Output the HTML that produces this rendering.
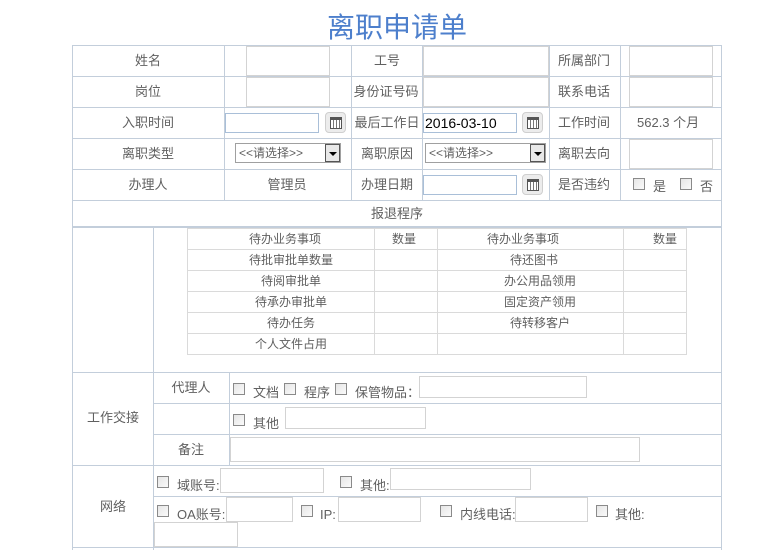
<!DOCTYPE html>
<html><head><meta charset="utf-8">
<style>
*{margin:0;padding:0;box-sizing:border-box}
body{width:782px;height:550px;background:#fff;position:relative;overflow:hidden;font-family:"Liberation Sans","Noto Sans CJK SC",sans-serif;font-size:13px;color:#606060}
div{position:absolute}
.h{height:1px;background:#c3cedb}
.v{width:1px;background:#c3cedb}
.ih{height:1px;background:#dadada}
.iv{width:1px;background:#dadada}
.t{white-space:nowrap;line-height:18px}
.c{transform:translateX(-50%)}
.in{border:1px solid #d3d3d3;background:#fff}
.bin{border:1px solid #a9bfd8;background:#fff}
.cb{width:12px;height:12px;border:1px solid #8a8a8a;background:linear-gradient(135deg,#e6e6e6,#fafafa)}
.cal{width:21px;height:21px;border:1px solid #cfcfcf;border-radius:4px;background:#ececec}
.cal i{position:absolute;left:4px;top:4px;width:12px;height:12px;border:1px solid #555;border-top:3px solid #555;background:repeating-linear-gradient(90deg,#fff 0 2px,#777 2px 3px),#fff}
.sel{border:1px solid #a0a0a0;background:#fff;height:20px;font-size:12px;line-height:18px;padding-left:3px}
.sel b{position:absolute;right:0;top:0;width:15px;height:18px;border:1px solid #555;background:#e8e8e8}
.sel b:after{content:"";position:absolute;left:3px;top:7px;border-left:4px solid transparent;border-right:4px solid transparent;border-top:4px solid #000}
.s12{font-size:12px}
</style></head><body>
<div class="t" style="left:397px;top:12px;transform:translateX(-50%);font-size:28px;line-height:32px;color:#4d7fcc">离职申请单</div>

<div class="h" style="left:72px;width:650px;top:45px"></div>
<div class="h" style="left:72px;width:650px;top:76px"></div>
<div class="h" style="left:72px;width:650px;top:107px"></div>
<div class="h" style="left:72px;width:650px;top:138px"></div>
<div class="h" style="left:72px;width:650px;top:169px"></div>
<div class="h" style="left:72px;width:650px;top:200px"></div>
<div class="h" style="left:72px;width:650px;top:226px;height:2px"></div>
<div class="h" style="left:72px;width:650px;top:372px"></div>
<div class="h" style="left:153px;width:569px;top:403px"></div>
<div class="h" style="left:153px;width:569px;top:434px"></div>
<div class="h" style="left:72px;width:650px;top:465px"></div>
<div class="h" style="left:153px;width:569px;top:496px"></div>
<div class="h" style="left:72px;width:650px;top:547px"></div>
<div class="v" style="left:72px;top:45px;height:505px"></div>
<div class="v" style="left:721px;top:45px;height:505px"></div>
<div class="v" style="left:224px;top:45px;height:155px"></div>
<div class="v" style="left:351px;top:45px;height:155px"></div>
<div class="v" style="left:422px;top:45px;height:155px"></div>
<div class="v" style="left:549px;top:45px;height:155px"></div>
<div class="v" style="left:620px;top:45px;height:155px"></div>
<div class="v" style="left:153px;top:228px;height:322px"></div>
<div class="v" style="left:229px;top:372px;height:93px"></div>

<div class="t c" style="left:148px;top:52px">姓名</div>
<div class="in" style="left:246px;top:46px;width:84px;height:30px"></div>
<div class="t c" style="left:387px;top:52px">工号</div>
<div class="in" style="left:423px;top:46px;width:126px;height:30px"></div>
<div class="t c" style="left:584px;top:52px">所属部门</div>
<div class="in" style="left:629px;top:46px;width:84px;height:30px"></div>
<div class="t c" style="left:148px;top:83px">岗位</div>
<div class="in" style="left:246px;top:77px;width:84px;height:30px"></div>
<div class="t c" style="left:386px;top:83px">身份证号码</div>
<div class="in" style="left:423px;top:77px;width:126px;height:30px"></div>
<div class="t c" style="left:584px;top:83px">联系电话</div>
<div class="in" style="left:629px;top:77px;width:84px;height:30px"></div>
<div class="t c" style="left:148px;top:114px">入职时间</div>
<div class="bin" style="left:225px;top:113px;width:94px;height:20px"></div>
<div class="cal" style="left:325px;top:112px"><i></i></div>
<div class="t c" style="left:387px;top:114px">最后工作日</div>
<div class="bin" style="left:423px;top:113px;width:94px;height:20px;color:#000;font-size:14px;line-height:18px;padding-left:1px">2016-03-10</div>
<div class="cal" style="left:522px;top:112px"><i></i></div>
<div class="t c" style="left:584px;top:114px">工作时间</div>
<div class="t" style="left:637px;top:114px">562.3 个月</div>
<div class="t c" style="left:148px;top:145px">离职类型</div>
<div class="sel" style="left:235px;top:143px;width:106px">&lt;&lt;请选择&gt;&gt;<b></b></div>
<div class="t c" style="left:387px;top:145px">离职原因</div>
<div class="sel" style="left:425px;top:143px;width:121px">&lt;&lt;请选择&gt;&gt;<b></b></div>
<div class="t c" style="left:584px;top:145px">离职去向</div>
<div class="in" style="left:629px;top:139px;width:84px;height:30px"></div>
<div class="t c" style="left:148px;top:176px">办理人</div>
<div class="t c" style="left:287px;top:176px">管理员</div>
<div class="t c" style="left:387px;top:176px">办理日期</div>
<div class="bin" style="left:423px;top:175px;width:94px;height:20px"></div>
<div class="cal" style="left:522px;top:174px"><i></i></div>
<div class="t c" style="left:584px;top:176px">是否违约</div>
<div class="cb" style="left:633px;top:178px"></div>
<div class="t" style="left:653px;top:178px">是</div>
<div class="cb" style="left:680px;top:178px"></div>
<div class="t" style="left:700px;top:178px">否</div>
<div class="t c" style="left:397px;top:205px">报退程序</div>

<div class="ih" style="left:187px;width:500px;top:228px"></div>
<div class="ih" style="left:187px;width:500px;top:249px"></div>
<div class="ih" style="left:187px;width:500px;top:270px"></div>
<div class="ih" style="left:187px;width:500px;top:291px"></div>
<div class="ih" style="left:187px;width:500px;top:312px"></div>
<div class="ih" style="left:187px;width:500px;top:333px"></div>
<div class="ih" style="left:187px;width:500px;top:354px"></div>
<div class="iv" style="left:187px;top:228px;height:127px"></div>
<div class="iv" style="left:374px;top:228px;height:127px"></div>
<div class="iv" style="left:437px;top:228px;height:127px"></div>
<div class="iv" style="left:623px;top:228px;height:127px"></div>
<div class="iv" style="left:686px;top:228px;height:127px"></div>
<div class="t c s12" style="left:285px;top:230px">待办业务事项</div>
<div class="t c s12" style="left:404px;top:230px">数量</div>
<div class="t c s12" style="left:523px;top:230px">待办业务事项</div>
<div class="t c s12" style="left:665px;top:230px">数量</div>
<div class="t c s12" style="left:291px;top:251px">待批审批单数量</div>
<div class="t c s12" style="left:534px;top:251px">待还图书</div>
<div class="t c s12" style="left:291px;top:272px">待阅审批单</div>
<div class="t c s12" style="left:540px;top:272px">办公用品领用</div>
<div class="t c s12" style="left:291px;top:293px">待承办审批单</div>
<div class="t c s12" style="left:540px;top:293px">固定资产领用</div>
<div class="t c s12" style="left:291px;top:314px">待办任务</div>
<div class="t c s12" style="left:540px;top:314px">待转移客户</div>
<div class="t c s12" style="left:291px;top:335px">个人文件占用</div>

<div class="t c" style="left:113px;top:409px">工作交接</div>
<div class="t c" style="left:191px;top:379px">代理人</div>
<div class="cb" style="left:233px;top:383px"></div>
<div class="t" style="left:253px;top:384px">文档</div>
<div class="cb" style="left:284px;top:383px"></div>
<div class="t" style="left:304px;top:384px">程序</div>
<div class="cb" style="left:335px;top:383px"></div>
<div class="t" style="left:355px;top:384px">保管物品：</div>
<div class="in" style="left:419px;top:376px;width:168px;height:22px"></div>
<div class="cb" style="left:233px;top:414px"></div>
<div class="t" style="left:253px;top:415px">其他</div>
<div class="in" style="left:285px;top:407px;width:141px;height:22px"></div>
<div class="t c" style="left:191px;top:441px">备注</div>
<div class="in" style="left:230px;top:437px;width:410px;height:25px"></div>

<div class="t c" style="left:113px;top:498px">网络</div>
<div class="cb" style="left:157px;top:476px"></div>
<div class="t" style="left:177px;top:477px">域账号:</div>
<div class="in" style="left:220px;top:468px;width:104px;height:25px"></div>
<div class="cb" style="left:340px;top:476px"></div>
<div class="t" style="left:360px;top:477px">其他:</div>
<div class="in" style="left:390px;top:468px;width:141px;height:22px"></div>
<div class="cb" style="left:157px;top:505px"></div>
<div class="t" style="left:177px;top:506px">OA账号:</div>
<div class="in" style="left:226px;top:497px;width:67px;height:25px"></div>
<div class="cb" style="left:301px;top:505px"></div>
<div class="t" style="left:320px;top:506px">IP:</div>
<div class="in" style="left:338px;top:497px;width:83px;height:25px"></div>
<div class="cb" style="left:440px;top:505px"></div>
<div class="t" style="left:460px;top:506px">内线电话:</div>
<div class="in" style="left:515px;top:497px;width:73px;height:25px"></div>
<div class="cb" style="left:596px;top:505px"></div>
<div class="t" style="left:615px;top:506px">其他:</div>
<div class="in" style="left:154px;top:522px;width:84px;height:25px"></div>
</body></html>
